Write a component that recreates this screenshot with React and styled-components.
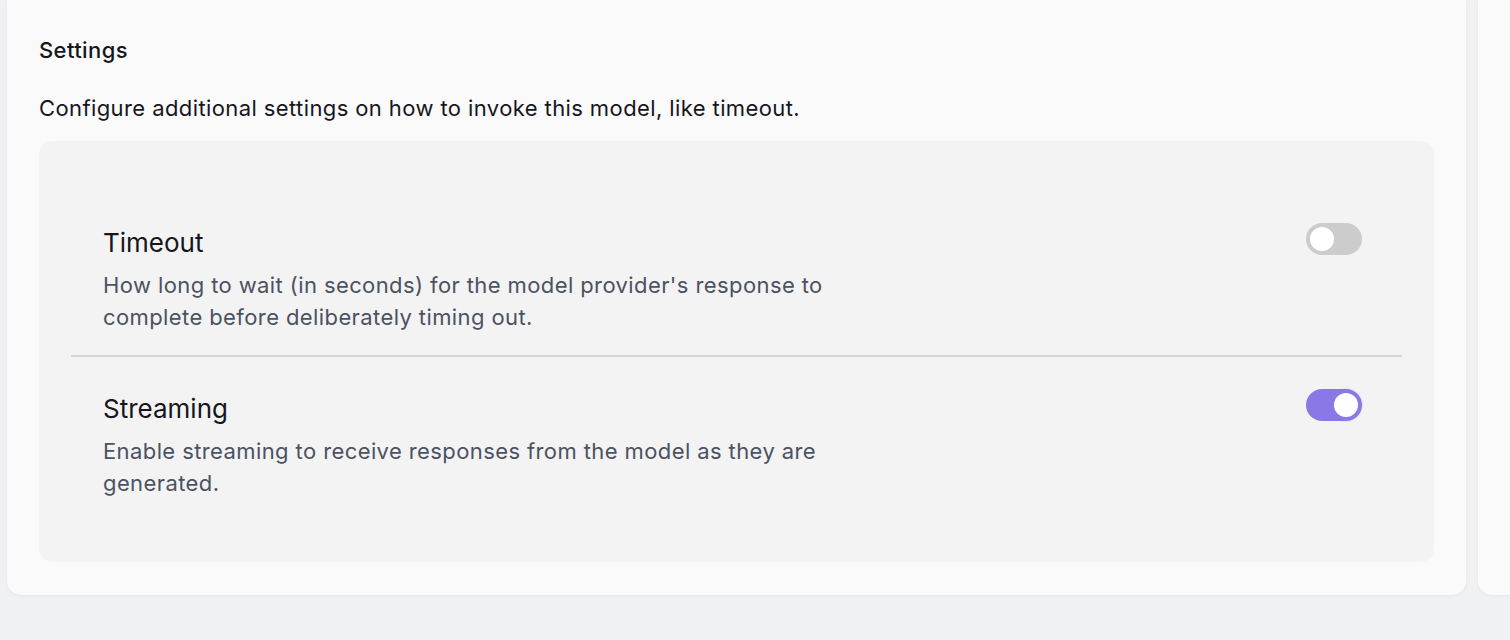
import styled, { createGlobalStyle } from 'styled-components'
import { useState } from 'react'

const GlobalStyle = createGlobalStyle`
  html, body {
    margin: 0;
    padding: 0;
    background: #f0f1f3;
    overflow: hidden;
  }
  body {
    font-family: Inter, "Noto Sans", sans-serif;
  }
`;

const Page = styled.div`
  display: flex;
  gap: 12px;
  padding-left: 7px;
  width: 100%;
  height: 640px;
  box-sizing: border-box;
  overflow: hidden;
`;

const Card = styled.section`
  flex: none;
  width: 1459px;
  height: 595px;
  box-sizing: border-box;
  padding: 34px 32px 33px;
  background: #fafafa;
  border-radius: 0 0 14px 14px;
  box-shadow: 0 1px 3px rgba(0, 0, 0, 0.06);
  display: flex;
  flex-direction: column;
`;

const SideCard = styled.aside`
  flex: none;
  width: 200px;
  height: 595px;
  background: #fafafa;
  border-radius: 0 0 14px 14px;
  box-shadow: 0 1px 3px rgba(0, 0, 0, 0.06);
`;

const Heading = styled.h2`
  margin: 0;
  font-size: 22px;
  line-height: 32px;
  font-weight: 500;
  letter-spacing: 0.4px;
  color: #16161d;
`;

const Intro = styled.p`
  margin: 26px 0 17px;
  font-size: 22px;
  line-height: 32px;
  letter-spacing: 0.4px;
  color: #16161d;
`;

const Panel = styled.div`
  flex: 1;
  background: #f3f3f4;
  border-radius: 14px;
  padding: 48px 32px 0;
`;

const Row = styled.div`
  display: flex;
  justify-content: space-between;
  align-items: flex-start;
  padding: ${props => props.first ? '38px' : '36px'} 40px 22px 32px;
  border-top: ${props => props.first ? 'none' : '2px solid #d6d6d8'};
`;

const Text = styled.div`
  max-width: 760px;
`;

const Title = styled.div`
  font-size: 26px;
  line-height: 32px;
  color: #16161d;
`;

const Desc = styled.div`
  margin-top: 10px;
  font-size: 22px;
  line-height: 32px;
  letter-spacing: 0.4px;
  color: #4b5261;
`;

const Switch = styled.button`
  position: relative;
  flex: none;
  width: 56px;
  height: 32px;
  margin-top: -4px;
  padding: 0;
  border: none;
  border-radius: 16px;
  cursor: pointer;
  background: ${props => props.on ? '#8a78e6' : '#cccccc'};
`;

const Knob = styled.span`
  position: absolute;
  top: 4px;
  left: ${props => props.on ? '28px' : '4px'};
  width: 24px;
  height: 24px;
  border-radius: 50%;
  background: #ffffff;
  box-shadow: ${props => props.on ? '0 0 0 5px rgba(138, 120, 230, 0.12)' : 'none'};
  transition: left .15s ease;
`;

const settings = [
  {
    key: 'timeout',
    title: 'Timeout',
    desc: "How long to wait (in seconds) for the model provider's response to complete before deliberately timing out.",
    on: false,
  },
  {
    key: 'streaming',
    title: 'Streaming',
    desc: 'Enable streaming to receive responses from the model as they are generated.',
    on: true,
  },
];

export default function App() {
  const [state, setState] = useState(
    Object.fromEntries(settings.map(s => [s.key, s.on]))
  );

  function toggle(key) {
    setState({ ...state, [key]: !state[key] });
  }

  return (
    <>
      <GlobalStyle />
      <Page>
        <Card>
          <Heading>Settings</Heading>
          <Intro>Configure additional settings on how to invoke this model, like timeout.</Intro>
          <Panel>
            {settings.map((s, i) => (
              <Row key={s.key} first={i === 0}>
                <Text>
                  <Title>{s.title}</Title>
                  <Desc>{s.desc}</Desc>
                </Text>
                <Switch on={state[s.key]} onClick={() => toggle(s.key)}>
                  <Knob on={state[s.key]} />
                </Switch>
              </Row>
            ))}
          </Panel>
        </Card>
        <SideCard />
      </Page>
    </>
  )
}
